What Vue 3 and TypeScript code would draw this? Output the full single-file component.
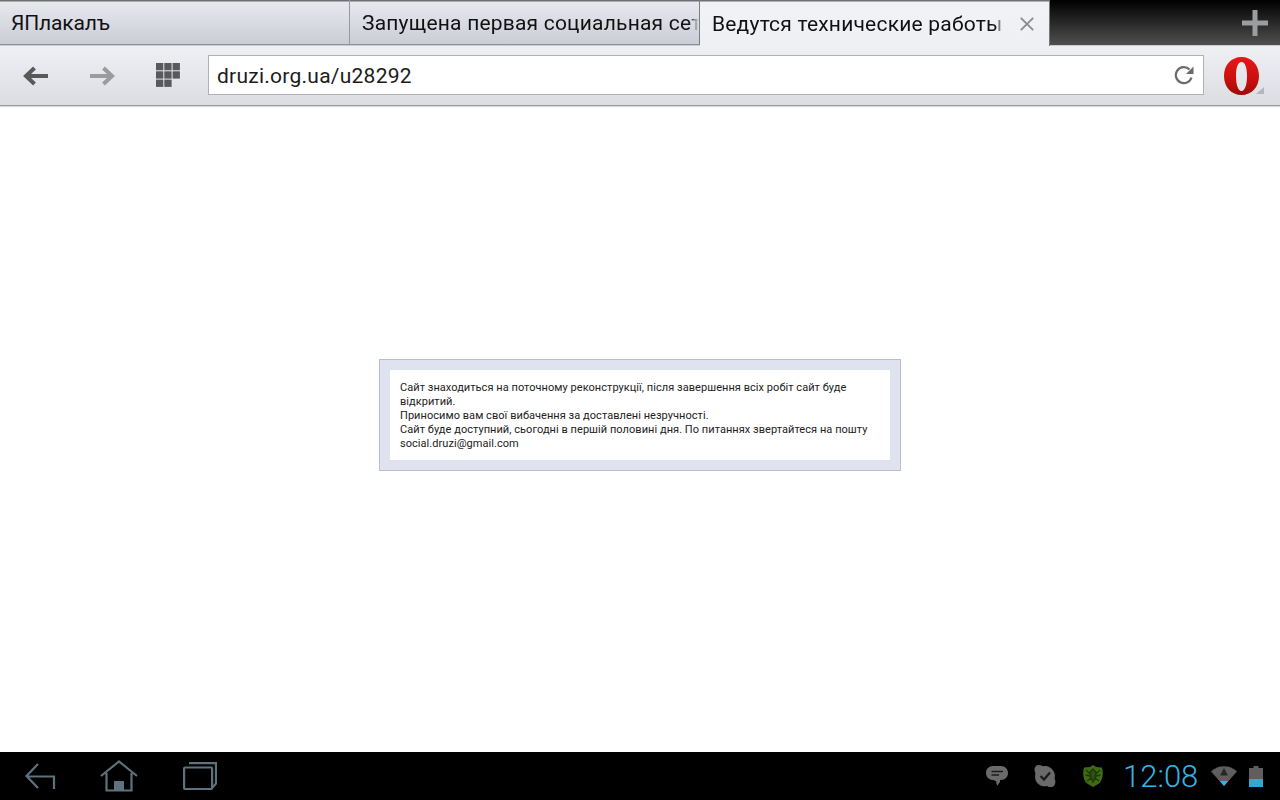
<script setup lang="ts">
const lines = [
  'Сайт знаходиться на поточному реконструкції, після завершення всіх робіт сайт буде відкритий.',
  'Приносимо вам свої вибачення за доставлені незручності.',
  'Сайт буде доступний, сьогодні в першій половині дня. По питаннях звертайтеся на пошту social.druzi@gmail.com',
]
</script>

<template>
  <div class="screen">
    <div class="tabs">
      <div class="tab first"><span class="tab-text">ЯПлакалъ</span></div>
      <div class="tab second"><span class="tab-text">Запущена первая социальная сеть</span></div>
      <div class="tab active">
        <span class="tab-text">Ведутся технические работы</span>
        <svg class="close" viewBox="0 0 14 14" width="14" height="14"><path d="M.8 .8 13.200 13.200M13.200 .8 .8 13.200" stroke="#8a8c90" stroke-width="1.900" fill="none" /></svg>
      </div>
      <div class="tab-space">
        <svg viewBox="0 0 26 26" width="26" height="26"><path d="M13 0V26M0 13H26" stroke="#9b9da0" stroke-width="5" fill="none" /></svg>
      </div>
    </div>

    <div class="toolbar">
      <svg class="nav back" viewBox="0 0 26 20" width="26" height="20"><path d="M26 10H5M12.500 2 4 10l8.500 8" stroke="#58595b" stroke-width="4" fill="none" /></svg>
      <svg class="nav fwd" viewBox="0 0 26 20" width="26" height="20"><path d="M0 10H21M13.500 2 22 10l-8.500 8" stroke="#9a9b9d" stroke-width="4" fill="none" /></svg>
      <svg class="grid-icon" viewBox="0 0 24 24" width="24" height="24" fill="#58595b">
        <rect x="0" y="0" width="7.300" height="7.300" /><rect x="8.300" y="0" width="7.300" height="7.300" /><rect x="16.600" y="0" width="7.300" height="7.300" />
        <rect x="0" y="8.300" width="7.300" height="7.300" /><rect x="8.300" y="8.300" width="7.300" height="7.300" /><rect x="16.600" y="8.300" width="7.300" height="7.300" />
        <rect x="0" y="16.600" width="7.300" height="7.300" /><rect x="8.300" y="16.600" width="7.300" height="7.300" />
      </svg>
      <div class="address">
        <span class="url">druzi.org.ua/u28292</span>
        <svg class="reload" viewBox="0 0 20 20" width="20" height="20"><path d="M17.500 12.500A8 8 0 1 1 15.500 4.500" stroke="#6a6b6d" stroke-width="2.200" fill="none" /><path d="M19.500 1.500V9H12Z" fill="#6a6b6d" /></svg>
      </div>
      <div class="opera">
        <svg viewBox="0 0 42 40" width="42" height="40">
          <defs><linearGradient id="og" x1="0" y1="0" x2="0" y2="1"><stop offset="0" stop-color="#e61818" /><stop offset=".6" stop-color="#c90f0f" /><stop offset="1" stop-color="#a00a0a" /></linearGradient></defs>
          <path fill-rule="evenodd" fill="url(#og)" d="M19.500 1C29.500 1 37 8.800 37 20S29.500 39 19.500 39 2 31.200 2 20 9.500 1 19.500 1ZM19.500 6C15.800 6 14 12 14 20S15.800 35 19.500 35 25 28 25 20 23.200 6 19.500 6Z" />
          <path d="M42 31v7H34Z" fill="#b4b6ba" />
        </svg>
      </div>
    </div>

    <main class="page">
      <div class="notice">
        <div class="notice-inner">
          <div v-for="line in lines" :key="line">{{ line }}</div>
        </div>
      </div>
    </main>

    <div class="sysbar">
      <div class="softkeys">
        <svg class="key-back" viewBox="0 0 32 28" width="32" height="28" fill="none" stroke="#5d727c" stroke-width="2.200"><path d="M14 2 2.500 14 14 26M2.500 14.500H30V27" /></svg>
        <svg class="key-home" viewBox="0 0 38 32" width="38" height="32" fill="none" stroke="#5d727c" stroke-width="2.200"><path d="M1 16 19 1.500 37 16M6.500 13V30.500H31.500V13" /><rect x="14" y="21" width="10" height="10" fill="#5d727c" stroke="none" /></svg>
        <svg class="key-recent" viewBox="0 0 34 28" width="34" height="28" fill="none" stroke="#5d727c" stroke-width="2.200"><rect x="1.100" y="5.500" width="28" height="21.500" rx="1" /><path d="M6 1.100H33V21.500L29.500 25.500" /></svg>
      </div>
      <div class="status">
        <svg class="ic-msg" viewBox="0 0 22 20" width="22" height="20"><path fill="#6a6a6a" d="M7 0H15C19 0 22 3 22 7S19 14 15 14H14V16L11 20 10 15 7 14C3 14 0 11 0 7S3 0 7 0Z" /><path d="M5.500 5.500H17M5.500 9H13" stroke="#1c1c1c" stroke-width="1.700" /></svg>
        <svg class="ic-skype" viewBox="0 0 22 22" width="22" height="22"><path fill="#6a6a6a" d="M5 0C7 0 8 1 9.500 1.200 14 .5 18 3 20 7 21 9.500 21 11.500 20.500 13.500 22 16 22 22 16.500 22 15 22 14 21.500 12.500 21 8 22 4 20 2 16 .8 13.500 .8 11 1.500 8.500 -.5 5 .5 0 5 0Z" /><path d="M6.500 11 10 14.500 16 7.500" stroke="#1c1c1c" stroke-width="2.300" fill="none" /></svg>
        <svg class="ic-shield" viewBox="0 0 20 22" width="20" height="22"><path fill="#3f6b14" d="M10 0 13 2 19 2.500C20.500 8 20 15 16 18.500L10 22 4 18.500C0 15 -.5 8 1 2.500L7 2Z" /><path d="M10 4 13 7 12.500 12 10 17 7.500 12 7 7ZM3 5 7 9M17 5 13 9M2.500 10 7 11M17.500 10 13 11M4 16 8 13M16 16 12 13" stroke="#1f380a" stroke-width="1.400" fill="#2e5010" /></svg>
        <span class="clock">12:08</span>
        <svg class="ic-wifi" viewBox="0 0 26 20" width="26" height="20"><path d="M0 5.500C7 -1.500 19 -1.500 26 5.500L13 20Z" fill="#5e5e5e" /><path d="M13 2 17 9.500H9Z" fill="#262626" /><path d="M9 15H17L13 20Z" fill="#35b5e5" /></svg>
        <svg class="ic-batt" viewBox="0 0 14 21" width="14" height="21"><path d="M4.500 0H9.500V2H14V21H0V2H4.500Z" fill="#5e5e5e" /><rect y="13" width="14" height="8" fill="#35a5d5" /></svg>
      </div>
    </div>
  </div>
</template>

<style>
html, body { margin: 0; background: #fff; }
</style>

<style scoped>
.screen {
  width: 1280px;
  height: 800px;
  display: flex;
  flex-direction: column;
  overflow: hidden;
  font-family: Roboto, "Liberation Sans", sans-serif;
  color: #111;
}
.tabs {
  height: 46px;
  flex: none;
  display: flex;
  background: linear-gradient(#6f7072 0 1px, #e8e9ee 2px, #c9cbd6);
}
.tab {
  height: 45px;
  box-sizing: border-box;
  display: flex;
  align-items: center;
  overflow: hidden;
  font-size: 21px;
  letter-spacing: .2px;
  white-space: nowrap;
  padding: 2px 0 0 12px;
  flex: none;
  border-bottom: 1px solid #8f9094;
}
.tab-text { display: block; overflow: hidden; }
.first { width: 350px; border-right: 1px solid #98999d; letter-spacing: -.15px; padding-left: 11px; }
.second { width: 350px; border-right: 1px solid #7d7e82; }
.second .tab-text {
  width: 337px;
  -webkit-mask-image: linear-gradient(90deg, #000 97%, transparent);
  mask-image: linear-gradient(90deg, #000 97%, transparent);
}
.active {
  width: 350px;
  height: 46px;
  border-bottom: 0;
  background: linear-gradient(#6f7072 0 1px, #f1f2f6 2px, #eff0f4);
  border-right: 1px solid #77787c;
}
.active .tab-text {
  width: 292px;
  -webkit-mask-image: linear-gradient(90deg, #000 97%, transparent);
  mask-image: linear-gradient(90deg, #000 97%, transparent);
}
.close { margin-left: 16px; flex: none; }
.tab-space {
  flex: 1;
  height: 45px;
  display: flex;
  justify-content: flex-end;
  align-items: center;
  padding-right: 12px;
  background: linear-gradient(#000, #505050);
}
.toolbar {
  height: 60px;
  box-sizing: border-box;
  flex: none;
  display: flex;
  align-items: center;
  padding: 0 14px 2px 22px;
  background: linear-gradient(#eff0f4, #dcdde2);
  border-bottom: 1px solid #98999c;
  box-shadow: 0 1px 1px #ddd;
}
.nav { flex: none; margin-top: 2px; }
.fwd { margin-left: 42px; }
.grid-icon { margin-left: 40px; margin-top: 1px; flex: none; }
.address {
  margin-left: 28px;
  width: 996px;
  height: 40px;
  box-sizing: border-box;
  flex: none;
  display: flex;
  align-items: center;
  justify-content: space-between;
  padding: 0 9px 0 8px;
  background: #fff;
  border: 1px solid #b0b1b4;
}
.url { font-size: 21px; letter-spacing: .25px; color: #1c1c1c; padding-top: 2px; }
.reload { margin-top: 1px; }
.opera { margin-left: 18px; width: 42px; height: 40px; flex: none; margin-top: 2px; }
.page {
  flex: 1;
  display: flex;
  align-items: flex-start;
  justify-content: center;
  padding-top: 253px;
}
.notice {
  width: 522px;
  box-sizing: border-box;
  padding: 10px;
  background: #dfe2ef;
  border: 1px solid #bcbfcb;
}
.notice-inner {
  background: #fff;
  padding: 11px 10px 9px;
  font-size: 11px;
  letter-spacing: .05px;
  line-height: 14px;
  color: #222;
}
.sysbar {
  height: 48px;
  flex: none;
  display: flex;
  align-items: center;
  justify-content: space-between;
  background: #000;
}
.softkeys {
  display: flex;
  align-items: center;
  padding-left: 24px;
}
.key-home { margin-left: 44px; }
.key-recent { margin-left: 45px; }
.status {
  display: flex;
  align-items: center;
  padding-right: 17px;
}
.ic-skype { margin-left: 26px; }
.ic-shield { margin-left: 27px; }
.clock {
  margin-left: 20px;
  font-size: 31px;
  font-weight: 300;
  color: #35b5e5;
  width: 76px;
  padding-top: 1px;
  white-space: nowrap;
}
.ic-wifi { margin-left: 12px; }
.ic-batt { margin-left: 12px; }
</style>
